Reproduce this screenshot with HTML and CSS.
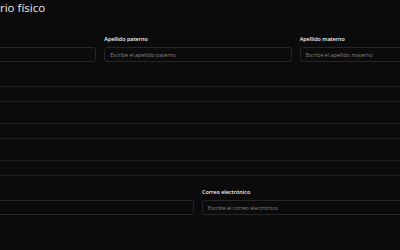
FILE: index.html
```html
<!DOCTYPE html>
<html lang="es">

<head>
    <meta charset="UTF-8">
    <meta name="viewport" content="width=device-width, initial-scale=1.0">
    <title>Registro físico</title>
    <link rel="stylesheet" href="styles.css">
</head>

<body>
    <h1 class="titulo">rio físico</h1>

    <form class="forma">
        <div class="fila tres">
            <div class="campo">
                <label class="etiqueta"></label>
                <input type="text" class="entrada" placeholder="">
            </div>
            <div class="campo">
                <label class="etiqueta">Apellido paterno</label>
                <input type="text" class="entrada" placeholder="Escribe el apellido paterno">
            </div>
            <div class="campo">
                <label class="etiqueta">Apellido materno</label>
                <input type="text" class="entrada" placeholder="Escribe el apellido materno">
            </div>
        </div>

        <div class="lineas">
            <div class="linea"></div>
            <div class="linea"></div>
            <div class="linea"></div>
        </div>

        <div class="fila dos">
            <div class="campo">
                <label class="etiqueta"></label>
                <input type="text" class="entrada" placeholder="">
            </div>
            <div class="campo">
                <label class="etiqueta">Correo electrónico</label>
                <input type="text" class="entrada" placeholder="Escribe el correo electrónico">
            </div>
        </div>
    </form>
</body>

</html>
```

FILE: styles.css
```css
body {
    margin: 0;
    background-color: #0c0b0b;
    font-family: "Open Sans", "Noto Sans", sans-serif;
    color: #e6e6e6;
    overflow: hidden;
}

.titulo {
    margin: 0;
    padding-top: 0;
    font-size: 11.5px;
    font-weight: 400;
    line-height: 16px;
    color: #e8e8e8;
}

.forma {
    margin-left: -91px;
    width: 578px;
    margin-top: 19px;
}

.fila {
    display: grid;
    gap: 8px;
}

.tres {
    grid-template-columns: 1fr 1fr 1fr;
}

.dos {
    grid-template-columns: 1fr 1fr;
    margin-top: 12px;
}

.campo {
    display: flex;
    flex-direction: column;
    gap: 4px;
}

.etiqueta {
    height: 8px;
    font-size: 5.4px;
    font-weight: 600;
    line-height: 8px;
    color: #f4f4f4;
}

.entrada {
    box-sizing: border-box;
    height: 15px;
    margin: 0;
    padding: 0 5px;
    border: solid #262626 1px;
    border-radius: 3px;
    background-color: #0c0b0b;
    font-family: inherit;
    font-size: 5.3px;
    color: #e6e6e6;
    outline: none;
}

.entrada::placeholder {
    color: #858585;
}

.lineas {
    display: flex;
    flex-direction: column;
    gap: 21px;
    margin-top: 24px;
}

.linea {
    box-sizing: border-box;
    height: 16px;
    border-top: solid #1c1c1e 1px;
    border-bottom: solid #1c1c1e 1px;
}
```
